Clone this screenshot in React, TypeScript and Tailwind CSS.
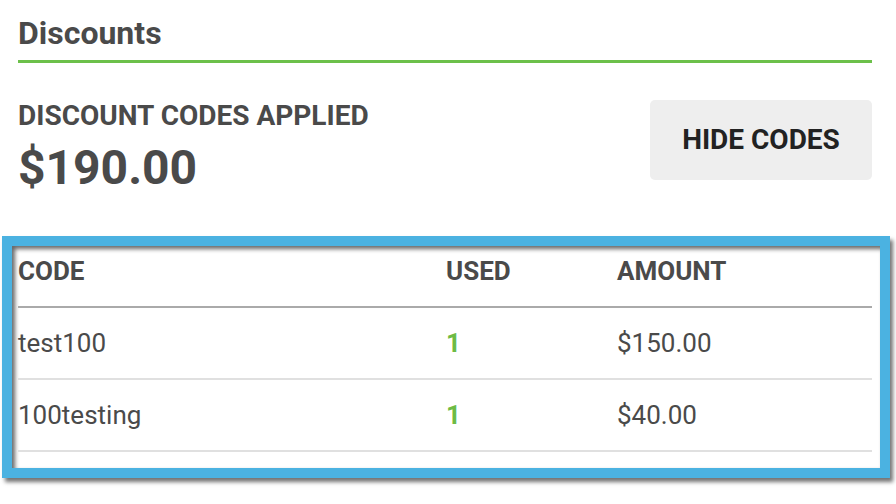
const codes = [
  { code: "test100", used: 1, amount: "$150.00" },
  { code: "100testing", used: 1, amount: "$40.00" },
];

export default function App() {
  return (
    <div className="w-[896px] h-[504px] overflow-hidden bg-white font-['Roboto',sans-serif] text-[#4a4a4a]">
      <div className="pl-[18px] pr-[24px]">
        <h2 className="mt-[17px] pb-[11px] border-b-[3px] border-[#6cc04a] text-[32px] leading-[32px] font-bold">
          Discounts
        </h2>
        <div className="mt-[37px] flex items-start justify-between">
          <div className="pt-[2px]">
            <div className="text-[28px] leading-[28px] font-bold">DISCOUNT CODES APPLIED</div>
            <div className="mt-[14px] text-[48px] leading-[48px] font-bold">$190.00</div>
          </div>
          <button
            type="button"
            className="w-[222px] h-[80px] rounded-[5px] bg-[#eeeeee] text-[28px] font-bold text-[#222222]"
          >
            HIDE CODES
          </button>
        </div>
      </div>

      <div className="mt-[44px] pl-[2px]">
        <div className="w-[888px] border-[10px] border-[#4bb2e1] shadow-[3px_4px_4px_rgba(0,0,0,0.55)]">
          <div className="pl-[6px] pr-[8px] pb-[16px] bg-white shadow-[inset_3px_3px_4px_rgba(0,0,0,0.6)]">
            <div className="grid grid-cols-[428px_171px_1fr] pt-[12px] pb-[22px] border-b-2 border-[#aaaaaa] text-[26px] leading-[26px] font-bold">
              <div>CODE</div>
              <div>USED</div>
              <div>AMOUNT</div>
            </div>
            {codes.map((row) => (
              <div
                key={row.code}
                className="grid grid-cols-[428px_171px_1fr] pt-[22px] pb-[22px] border-b-2 border-[#e0e0e0] text-[26px] leading-[26px]"
              >
                <div>{row.code}</div>
                <div className="font-bold text-[#6dbb45]">{row.used}</div>
                <div>{row.amount}</div>
              </div>
            ))}
          </div>
        </div>
      </div>
    </div>
  );
}
